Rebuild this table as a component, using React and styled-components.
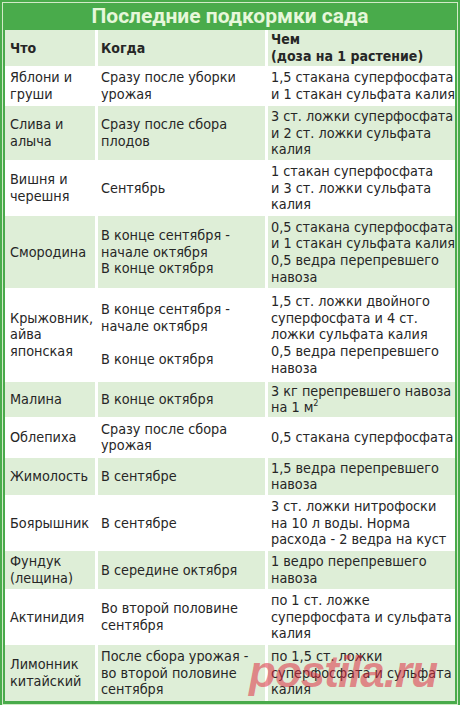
import React from "react";
import styled, { createGlobalStyle } from "styled-components";

const GlobalStyle = createGlobalStyle`
  html, body { margin: 0; padding: 0; background: #fff; }
  body { font-family: "DejaVu Sans Condensed", "DejaVu Sans", sans-serif; }
`;

const Frame = styled.div`
  position: relative;
  width: 460px;
  box-sizing: border-box;
  padding: 2px;
  background: #49ab4b;
`;

const Inner = styled.div`
  border: 1px solid #d2eac8;
  padding: 0 2px 3px;
  background: #49ab4b;
`;

const Title = styled.div`
  height: 27px;
  line-height: 27px;
  text-align: center;
  font-family: Roboto, "Liberation Sans", sans-serif;
  font-weight: 700;
  font-size: 21px;
  color: #e6f7da;
`;

const Table = styled.table`
  width: 100%;
  table-layout: fixed;
  border-collapse: separate;
  border-spacing: 0;
  font-size: 14.3px;
  line-height: 16.7px;
  color: #262626;
`;

const Row = styled.tr`
  height: ${({ $h }) => $h}px;
`;

const Cell = styled.td`
  box-sizing: border-box;
  padding: ${({ $split }) =>
    $split === "top" ? "5px 3px 0" : $split === "bottom" ? "0 3px 5px" : "1px 3px"};
  padding-left: ${({ $first }) => ($first ? 5 : 3)}px;
  border-left: ${({ $first }) => ($first ? "none" : "3px solid #fff")};
  background: ${({ $alt }) => ($alt ? "#deeed7" : "#fff")};
  font-weight: ${({ $head }) => ($head ? 700 : 400)};
  font-size: ${({ $head }) => ($head ? "14px" : "inherit")};
  vertical-align: middle;
  white-space: nowrap;
`;

const Sup = styled.sup`
  font-size: 9px;
  line-height: 0;
  vertical-align: 6px;
`;

const Watermark = styled.div`
  position: absolute;
  left: 249px;
  top: 650px;
  font-family: "Liberation Sans", Arial, sans-serif;
  font-weight: 700;
  font-style: italic;
  font-size: 44px;
  line-height: 44px;
  letter-spacing: -1px;
  color: rgba(222, 45, 65, 0.55);
  pointer-events: none;
`;

const Lines = ({ lines }) =>
  lines.map((l, i) => (
    <React.Fragment key={i}>
      {i > 0 && <br />}
      {l}
    </React.Fragment>
  ));

const rows = [
  {
    h: 40,
    what: ["Яблони и", "груши"],
    when: ["Сразу после уборки", "урожая"],
    dose: ["1,5 стакана суперфосфата", "и 1 стакан сульфата калия"],
  },
  {
    h: 54,
    what: ["Слива и", "алыча"],
    when: ["Сразу после сбора", "плодов"],
    dose: ["3 ст. ложки суперфосфата", "и 2 ст. ложки сульфата", "калия"],
  },
  {
    h: 56,
    what: ["Вишня и", "черешня"],
    when: ["Сентябрь"],
    dose: ["1 стакан суперфосфата", "и 3 ст. ложки сульфата", "калия"],
  },
  {
    h: 72,
    what: ["Смородина"],
    when: ["В конце сентября -", "начале октября", "В конце октября"],
    dose: [
      "0,5 стакана суперфосфата",
      "и 1 стакан сульфата калия",
      "0,5 ведра перепревшего",
      "навоза",
    ],
  },
  {
    h: 55,
    what: ["Крыжовник,", "айва", "японская"],
    when: ["В конце сентября -", "начале октября"],
    dose: ["1,5 ст. ложки двойного", "суперфосфата и 4 ст.", "ложки сульфата калия"],
    sub: {
      h: 37,
      when: ["В конце октября"],
      dose: ["0,5 ведра перепревшего", "навоза"],
    },
  },
  {
    h: 35,
    what: ["Малина"],
    when: ["В конце октября"],
    dose: [
      "3 кг перепревшего навоза",
      <>
        на 1 м<Sup>2</Sup>
      </>,
    ],
  },
  {
    h: 41,
    what: ["Облепиха"],
    when: ["Сразу после сбора", "урожая"],
    dose: ["0,5 стакана суперфосфата"],
  },
  {
    h: 37,
    what: ["Жимолость"],
    when: ["В сентябре"],
    dose: ["1,5 ведра перепревшего", "навоза"],
  },
  {
    h: 56,
    what: ["Боярышник"],
    when: ["В сентябре"],
    dose: ["3 ст. ложки нитрофоски", "на 10 л воды. Норма", "расхода - 2 ведра на куст"],
  },
  {
    h: 38,
    what: ["Фундук", "(лещина)"],
    when: ["В середине октября"],
    dose: ["1 ведро перепревшего", "навоза"],
  },
  {
    h: 56,
    what: ["Актинидия"],
    when: ["Во второй половине", "сентября"],
    dose: ["по 1 ст. ложке", "суперфосфата и сульфата", "калия"],
  },
  {
    h: 56,
    what: ["Лимонник", "китайский"],
    when: ["После сбора урожая -", "во второй половине", "сентября"],
    dose: ["по 1,5 ст. ложки", "суперфосфата и сульфата", "калия"],
  },
];

export default function App() {
  return (
    <>
      <GlobalStyle />
      <Frame>
        <Inner>
          <Title>Последние подкормки сада</Title>
          <Table>
            <colgroup>
              <col style={{ width: 90 }} />
              <col style={{ width: 170 }} />
              <col />
            </colgroup>
            <tbody>
              <Row $h={36}>
                <Cell $first $alt $head>
                  Что
                </Cell>
                <Cell $alt $head>
                  Когда
                </Cell>
                <Cell $alt $head>
                  <Lines lines={["Чем", "(доза на 1 растение)"]} />
                </Cell>
              </Row>
              {rows.map((r, i) => {
                const alt = i % 2 === 1;
                return (
                  <React.Fragment key={i}>
                    <Row $h={r.h}>
                      <Cell $first $alt={alt} rowSpan={r.sub ? 2 : 1}>
                        <Lines lines={r.what} />
                      </Cell>
                      <Cell $alt={alt} $split={r.sub && "top"}>
                        <Lines lines={r.when} />
                      </Cell>
                      <Cell $alt={alt} $split={r.sub && "top"}>
                        <Lines lines={r.dose} />
                      </Cell>
                    </Row>
                    {r.sub && (
                      <Row $h={r.sub.h}>
                        <Cell $alt={alt} $split="bottom">
                          <Lines lines={r.sub.when} />
                        </Cell>
                        <Cell $alt={alt} $split="bottom">
                          <Lines lines={r.sub.dose} />
                        </Cell>
                      </Row>
                    )}
                  </React.Fragment>
                );
              })}
            </tbody>
          </Table>
        </Inner>
        <Watermark>postila.ru</Watermark>
      </Frame>
    </>
  );
}
